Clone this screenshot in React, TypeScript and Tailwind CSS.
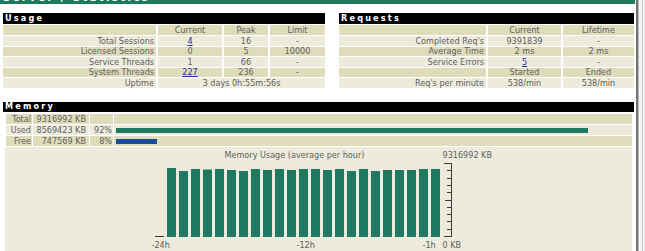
import React from "react";

const FONT = "font-['DejaVu_Sans_Condensed','DejaVu_Sans',sans-serif]";
const DARK = "bg-[#dedcbb]";
const LIGHT = "bg-[#edecdc]";

const ROWH = [
  "h-[10px] leading-[10px]",
  "h-[10px] leading-[10px]",
  "h-[9px] leading-[9px]",
  "h-[10px] leading-[10px]",
  "h-[9px] leading-[9px]",
  "h-[10px] leading-[10px]",
];

type Cell = { text: string; link?: boolean };
type Row = { label: string; cells: Cell[]; dark: boolean; span?: boolean };

const usageRows: Row[] = [
  { label: "", cells: [{ text: "Current" }, { text: "Peak" }, { text: "Limit" }], dark: true },
  { label: "Total Sessions", cells: [{ text: "4", link: true }, { text: "16" }, { text: "-" }], dark: false },
  { label: "Licensed Sessions", cells: [{ text: "0" }, { text: "5" }, { text: "10000" }], dark: true },
  { label: "Service Threads", cells: [{ text: "1" }, { text: "66" }, { text: "-" }], dark: false },
  { label: "System Threads", cells: [{ text: "227", link: true }, { text: "236" }, { text: "-" }], dark: true },
  { label: "Uptime", cells: [{ text: "3 days 0h:55m:56s" }], dark: false, span: true },
];

const reqRows: Row[] = [
  { label: "", cells: [{ text: "Current" }, { text: "Lifetime" }], dark: true },
  { label: "Completed Req's", cells: [{ text: "9391839" }, { text: "-" }], dark: false },
  { label: "Average Time", cells: [{ text: "2 ms" }, { text: "2 ms" }], dark: true },
  { label: "Service Errors", cells: [{ text: "5", link: true }, { text: "-" }], dark: false },
  { label: "", cells: [{ text: "Started" }, { text: "Ended" }], dark: true },
  { label: "Req's per minute", cells: [{ text: "538/min" }, { text: "538/min" }], dark: false },
];

function Val({ c }: { c: Cell }) {
  return c.link ? <span className="text-[#2b2ba0] underline">{c.text}</span> : <span>{c.text}</span>;
}

function Header({ title, h }: { title: string; h: string }) {
  return (
    <div className={`${h} bg-black text-white font-bold text-[9px] tracking-[2.2px] pl-[2px] flex items-center`}>
      {title}
    </div>
  );
}

function Table({ rows, cols, spanClass }: { rows: Row[]; cols: string; spanClass: string }) {
  return (
    <div className={`grid ${cols} gap-x-[2px] gap-y-px mt-px whitespace-nowrap`}>
      {rows.map((r, i) => (
        <React.Fragment key={i}>
          <div className={`${r.dark ? DARK : LIGHT} ${ROWH[i]} text-right pr-[2px]`}>{r.label}</div>
          {r.span ? (
            <div className={`${r.dark ? DARK : LIGHT} ${spanClass} ${ROWH[i]} text-center`}>
              <Val c={r.cells[0]} />
            </div>
          ) : (
            r.cells.map((c, j) => (
              <div key={j} className={`${r.dark ? DARK : LIGHT} ${ROWH[i]} text-center`}>
                <Val c={c} />
              </div>
            ))
          )}
        </React.Fragment>
      ))}
    </div>
  );
}

const barHeights = [0, 69, 66, 68, 67.5, 68, 67, 66, 68, 67, 68, 67, 68, 68, 67, 68, 66, 68, 66, 67, 67, 67, 68, 68];

function Chart() {
  const ticks = [0, 1, 2, 3, 4, 5, 6, 7, 8, 9, 10];
  return (
    <div className="relative w-[338px] h-[110px] mx-auto whitespace-nowrap">
      <span className="absolute left-[75px] top-[3px] leading-[10px]">Memory Usage (average per hour)</span>
      <span className="absolute left-[293px] top-[3px] leading-[10px]">9316992 KB</span>
      <svg className="absolute left-0 top-0" width="338" height="110" viewBox="0 0 338 110">
        {barHeights.map((h, i) =>
          i === 0 ? (
            <rect key={i} x={5} y={89} width={9} height={1} fill="#3a3a3a" />
          ) : (
            <rect key={i} x={5 + 12 * i} y={90 - h} width={9} height={h} fill="#1d7a61" />
          )
        )}
        <rect x={301} y={16} width={1} height={74} fill="#3a3a3a" />
        {ticks.map((t) => {
          const y = Math.round(16 + t * 7.3);
          const long = t === 0 || t === 10;
          const mid = t === 5;
          const x0 = long ? 294 : mid ? 295 : 297;
          return <rect key={t} x={x0} y={t === 10 ? 89 : y} width={302 - x0} height={1} fill="#3a3a3a" />;
        })}
      </svg>
      <span className="absolute left-[2px] top-[93px] leading-[10px]">-24h</span>
      <span className="absolute left-[147px] top-[93px] leading-[10px]">-12h</span>
      <span className="absolute left-[273px] top-[93px] leading-[10px]">-1h</span>
      <span className="absolute left-[293px] top-[93px] leading-[10px]">0 KB</span>
    </div>
  );
}

export default function App() {
  return (
    <div className={`flex w-[645px] h-[251px] overflow-hidden bg-white text-[9px] text-[#606060] ${FONT}`}>
      <div className="w-[636px] flex flex-col shrink-0">
        <div className="h-[4px] w-[635px] shrink-0 bg-[#1e7a5f] overflow-hidden">
          <div className="-mt-[8px] pl-[3px] text-[11px] leading-[12px] font-bold tracking-[2.5px] text-white whitespace-nowrap">
            Server / Statistics
          </div>
        </div>
        <div className="flex gap-[14px] pl-[3px] mt-[9px] shrink-0">
          <div className="w-[322px]">
            <Header title="Usage" h="h-[11px]" />
            <Table rows={usageRows} cols="grid-cols-[153px_64px_44px_55px]" spanClass="col-span-3" />
          </div>
          <div className="w-[295px]">
            <Header title="Requests" h="h-[11px]" />
            <Table rows={reqRows} cols="grid-cols-[147px_73px_71px]" spanClass="col-span-2" />
          </div>
        </div>
        <div className="ml-[3px] mt-[14px] w-[631px] shrink-0">
          <Header title="Memory" h="h-[10px]" />
          <div className="grid grid-cols-[26px_56px_23px_1fr] gap-x-px gap-y-px mt-[2px] ml-[3px] w-[626px] whitespace-nowrap">
            <div className={`${DARK} h-[10px] leading-[10px] text-right pr-px`}>Total</div>
            <div className={`${DARK} h-[10px] leading-[10px] text-right pr-[3px]`}>9316992 KB</div>
            <div className={`${DARK} h-[10px]`}></div>
            <div className={`${DARK} h-[10px]`}></div>

            <div className={`${LIGHT} h-[10px] leading-[10px] text-right pr-px`}>Used</div>
            <div className={`${LIGHT} h-[10px] leading-[10px] text-right pr-[3px]`}>8569423 KB</div>
            <div className={`${LIGHT} h-[10px] leading-[10px] text-right pr-px`}>92%</div>
            <div className={`${LIGHT} h-[10px] flex items-center pl-[2px] pr-[3px]`}>
              <div className="h-[5px] w-[92%] bg-[#1d7a61]" />
            </div>

            <div className={`${DARK} h-[10px] leading-[10px] text-right pr-px`}>Free</div>
            <div className={`${DARK} h-[10px] leading-[10px] text-right pr-[3px]`}>747569 KB</div>
            <div className={`${DARK} h-[10px] leading-[10px] text-right pr-px`}>8%</div>
            <div className={`${DARK} h-[10px] flex items-center pl-[2px] pr-[3px]`}>
              <div className="h-[5px] w-[8%] bg-[#1b4b9b]" />
            </div>

            <div className={`${LIGHT} col-span-4 -ml-px`}>
              <Chart />
            </div>
          </div>
        </div>
      </div>
      <div className="flex h-full shrink-0">
        <div className="w-[2px] bg-[#727272]" />
        <div className="w-px bg-[#bdbdbd]" />
        <div className="w-[3px] bg-[#f3f3f3]" />
        <div className="w-px bg-[#cfcfcf]" />
        <div className="w-[2px] bg-[#f3f3f3]" />
      </div>
    </div>
  );
}
